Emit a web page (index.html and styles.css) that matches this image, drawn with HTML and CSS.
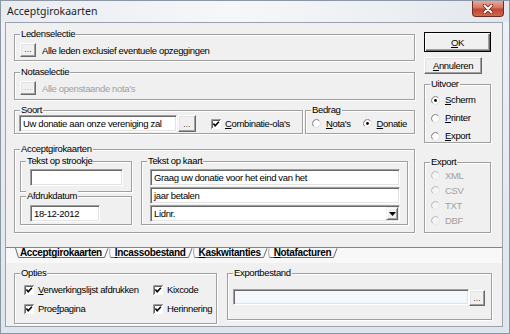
FILE: index.html
```html
<!DOCTYPE html>
<html lang="nl">
<head>
<meta charset="utf-8">
<title>Acceptgirokaarten</title>
<link rel="stylesheet" href="styles.css">
</head>
<body>
<div class="window">
  <div class="titlebar">
    <span class="title">Acceptgirokaarten</span>
    <div class="close">
      <svg width="14" height="10" viewBox="0 0 14 10"><path d="M3.5 1.5 L10.5 8.5 M10.5 1.5 L3.5 8.5" stroke="#6a2418" stroke-width="3.4" stroke-linecap="round"/><path d="M3.5 1.5 L10.5 8.5 M10.5 1.5 L3.5 8.5" stroke="#fff" stroke-width="1.9" stroke-linecap="round"/></svg>
    </div>
  </div>
  <div class="client">
    <div class="upper">
      <div class="leftcol">
        <div class="grp g-leden">
          <div class="legend">Ledenselectie</div>
          <div class="selrow">
            <div class="btn dots">...</div>
            <span class="seltext">Alle leden exclusief eventuele opzeggingen</span>
          </div>
        </div>
        <div class="grp g-nota">
          <div class="legend">Notaselectie</div>
          <div class="selrow">
            <div class="btn dots off">...</div>
            <span class="seltext off">Alle openstaande nota's</span>
          </div>
        </div>
        <div class="soortrow">
          <div class="grp g-soort">
            <div class="legend">Soort</div>
            <div class="ctlrow">
              <div class="edit e-soort">Uw donatie aan onze vereniging zal</div>
              <div class="btn dots d-soort">...</div>
              <div class="opt o-comb">
                <svg class="cb" viewBox="0 0 10 10"><rect width="10" height="10" fill="#fff"/><path d="M0.5 10V0.5H10" fill="none" stroke="#9a9a9a"/><path d="M1.5 9V1.5H9" fill="none" stroke="#606060"/><path d="M2.4 4.6 4.2 6.7 7.9 2.8" fill="none" stroke="#000" stroke-width="1.6"/></svg>
                <span><u>C</u>ombinatie-ola's</span>
              </div>
            </div>
          </div>
          <div class="grp g-bedrag">
            <div class="legend">Bedrag</div>
            <div class="ctlrow r-bedrag">
              <div class="opt">
                <svg class="rd" viewBox="0 0 9 9"><circle cx="4.5" cy="4.5" r="4" fill="#fff"/><path d="M1.67 7.33A4 4 0 0 1 7.33 1.67" fill="none" stroke="#7a7a7a"/><path d="M7.33 1.67A4 4 0 0 1 1.67 7.33" fill="none" stroke="#dedede"/></svg>
                <span><u>N</u>ota's</span>
              </div>
              <div class="opt o-don">
                <svg class="rd" viewBox="0 0 9 9"><circle cx="4.5" cy="4.5" r="4" fill="#fff"/><path d="M1.67 7.33A4 4 0 0 1 7.33 1.67" fill="none" stroke="#7a7a7a"/><path d="M7.33 1.67A4 4 0 0 1 1.67 7.33" fill="none" stroke="#dedede"/><circle cx="4.5" cy="4.5" r="1.4" fill="#000"/></svg>
                <span><u>D</u>onatie</span>
              </div>
            </div>
          </div>
        </div>
        <div class="grp g-accept">
          <div class="legend">Acceptgirokaarten</div>
          <div class="acc-body">
            <div class="acc-left">
              <div class="grp g-strook">
                <div class="legend">Tekst op strookje</div>
                <div class="edit e-strook"></div>
              </div>
              <div class="grp g-datum">
                <div class="legend">Afdrukdatum</div>
                <div class="edit e-datum">18-12-2012</div>
              </div>
            </div>
            <div class="grp g-kaart">
              <div class="legend">Tekst op kaart</div>
              <div class="kaart-fields">
                <div class="edit e-kaart">Graag uw donatie voor het eind van het</div>
                <div class="edit e-kaart">jaar betalen</div>
                <div class="edit e-kaart combo">
                  <span>Lidnr.</span>
                  <div class="ddbtn"><svg width="7" height="4" viewBox="0 0 7 4"><path d="M0 0H7L3.5 4Z" fill="#000"/></svg></div>
                </div>
              </div>
            </div>
          </div>
        </div>
      </div>
      <div class="rightcol">
        <div class="btn b-ok"><span><u>O</u>K</span></div>
        <div class="btn b-cancel"><span><u>A</u>nnuleren</span></div>
        <div class="grp g-uitvoer">
          <div class="legend">Uitvoer</div>
          <div class="radlist r-uit">
            <div class="opt">
              <svg class="rd" viewBox="0 0 9 9"><circle cx="4.5" cy="4.5" r="4" fill="#fff"/><path d="M1.67 7.33A4 4 0 0 1 7.33 1.67" fill="none" stroke="#7a7a7a"/><path d="M7.33 1.67A4 4 0 0 1 1.67 7.33" fill="none" stroke="#dedede"/><circle cx="4.5" cy="4.5" r="1.4" fill="#000"/></svg>
              <span><u>S</u>cherm</span>
            </div>
            <div class="opt">
              <svg class="rd" viewBox="0 0 9 9"><circle cx="4.5" cy="4.5" r="4" fill="#fff"/><path d="M1.67 7.33A4 4 0 0 1 7.33 1.67" fill="none" stroke="#7a7a7a"/><path d="M7.33 1.67A4 4 0 0 1 1.67 7.33" fill="none" stroke="#dedede"/></svg>
              <span><u>P</u>rinter</span>
            </div>
            <div class="opt">
              <svg class="rd" viewBox="0 0 9 9"><circle cx="4.5" cy="4.5" r="4" fill="#fff"/><path d="M1.67 7.33A4 4 0 0 1 7.33 1.67" fill="none" stroke="#7a7a7a"/><path d="M7.33 1.67A4 4 0 0 1 1.67 7.33" fill="none" stroke="#dedede"/></svg>
              <span><u>E</u>xport</span>
            </div>
          </div>
        </div>
        <div class="grp g-export">
          <div class="legend">Export</div>
          <div class="radlist r-exp">
            <div class="opt off">
              <svg class="rd" viewBox="0 0 9 9"><circle cx="4.5" cy="4.5" r="4" fill="#f4f4f4"/><path d="M1.67 7.33A4 4 0 0 1 7.33 1.67" fill="none" stroke="#b4b4b4"/><path d="M7.33 1.67A4 4 0 0 1 1.67 7.33" fill="none" stroke="#e6e6e6"/></svg>
              <span>XML</span>
            </div>
            <div class="opt off">
              <svg class="rd" viewBox="0 0 9 9"><circle cx="4.5" cy="4.5" r="4" fill="#f4f4f4"/><path d="M1.67 7.33A4 4 0 0 1 7.33 1.67" fill="none" stroke="#b4b4b4"/><path d="M7.33 1.67A4 4 0 0 1 1.67 7.33" fill="none" stroke="#e6e6e6"/></svg>
              <span>CSV</span>
            </div>
            <div class="opt off">
              <svg class="rd" viewBox="0 0 9 9"><circle cx="4.5" cy="4.5" r="4" fill="#f4f4f4"/><path d="M1.67 7.33A4 4 0 0 1 7.33 1.67" fill="none" stroke="#b4b4b4"/><path d="M7.33 1.67A4 4 0 0 1 1.67 7.33" fill="none" stroke="#e6e6e6"/></svg>
              <span>TXT</span>
            </div>
            <div class="opt off">
              <svg class="rd" viewBox="0 0 9 9"><circle cx="4.5" cy="4.5" r="4" fill="#f4f4f4"/><path d="M1.67 7.33A4 4 0 0 1 7.33 1.67" fill="none" stroke="#b4b4b4"/><path d="M7.33 1.67A4 4 0 0 1 1.67 7.33" fill="none" stroke="#e6e6e6"/></svg>
              <span>DBF</span>
            </div>
          </div>
        </div>
      </div>
    </div>
    <div class="tabbar">
      <svg class="tedge" width="5" height="10" viewBox="0 0 5 10"><path d="M0.5 0 L3.5 9.5 H5" fill="none" stroke="#6b6b6b"/></svg>
      <span class="tab">Acceptgirokaarten</span>
      <svg class="tsep" width="13" height="10" viewBox="0 0 13 10"><path d="M8 0.5 Q6.8 5 8.6 9.5" fill="none" stroke="#a8a8a8"/><path d="M0 9.5 H2.5 L6 0.3" fill="none" stroke="#6b6b6b"/><path d="M8.6 9.5 H13" fill="none" stroke="#6b6b6b"/></svg>
      <span class="tab"><u>I</u>ncassobestand</span>
      <svg class="tsep" width="13" height="10" viewBox="0 0 13 10"><path d="M8 0.5 Q6.8 5 8.6 9.5" fill="none" stroke="#a8a8a8"/><path d="M0 9.5 H2.5 L6 0.3" fill="none" stroke="#6b6b6b"/><path d="M8.6 9.5 H13" fill="none" stroke="#6b6b6b"/></svg>
      <span class="tab"><u>K</u>askwitanties</span>
      <svg class="tsep" width="13" height="10" viewBox="0 0 13 10"><path d="M8 0.5 Q6.8 5 8.6 9.5" fill="none" stroke="#a8a8a8"/><path d="M0 9.5 H2.5 L6 0.3" fill="none" stroke="#6b6b6b"/><path d="M8.6 9.5 H13" fill="none" stroke="#6b6b6b"/></svg>
      <span class="tab"><u>N</u>otafacturen</span>
      <svg class="tedge" width="7" height="10" viewBox="0 0 7 10"><path d="M0 9.5 H2.5 L6 0.3" fill="none" stroke="#6b6b6b"/></svg>
    </div>
    <div class="lower">
      <div class="grp g-opties">
        <div class="legend">Opties</div>
        <div class="optgrid">
          <div class="opt">
            <svg class="cb" viewBox="0 0 10 10"><rect width="10" height="10" fill="#fff"/><path d="M0.5 10V0.5H10" fill="none" stroke="#9a9a9a"/><path d="M1.5 9V1.5H9" fill="none" stroke="#606060"/><path d="M2.4 4.6 4.2 6.7 7.9 2.8" fill="none" stroke="#000" stroke-width="1.6"/></svg>
            <span><u>V</u>erwerkingslijst afdrukken</span>
          </div>
          <div class="opt">
            <svg class="cb" viewBox="0 0 10 10"><rect width="10" height="10" fill="#fff"/><path d="M0.5 10V0.5H10" fill="none" stroke="#9a9a9a"/><path d="M1.5 9V1.5H9" fill="none" stroke="#606060"/><path d="M2.4 4.6 4.2 6.7 7.9 2.8" fill="none" stroke="#000" stroke-width="1.6"/></svg>
            <span>Kixcode</span>
          </div>
          <div class="opt">
            <svg class="cb" viewBox="0 0 10 10"><rect width="10" height="10" fill="#fff"/><path d="M0.5 10V0.5H10" fill="none" stroke="#9a9a9a"/><path d="M1.5 9V1.5H9" fill="none" stroke="#606060"/><path d="M2.4 4.6 4.2 6.7 7.9 2.8" fill="none" stroke="#000" stroke-width="1.6"/></svg>
            <span>Proe<u>f</u>pagina</span>
          </div>
          <div class="opt">
            <svg class="cb" viewBox="0 0 10 10"><rect width="10" height="10" fill="#fff"/><path d="M0.5 10V0.5H10" fill="none" stroke="#9a9a9a"/><path d="M1.5 9V1.5H9" fill="none" stroke="#606060"/><path d="M2.4 4.6 4.2 6.7 7.9 2.8" fill="none" stroke="#000" stroke-width="1.6"/></svg>
            <span>Herinnering</span>
          </div>
        </div>
      </div>
      <div class="grp g-bestand">
        <div class="legend">Exportbestand</div>
        <div class="fileline">
          <div class="edit e-file"></div>
          <div class="btn dots d-file">...</div>
        </div>
      </div>
    </div>
  </div>
</div>
</body>
</html>
```

FILE: styles.css
```css
* { box-sizing: border-box; }
html, body { margin: 0; padding: 0; }
body {
  width: 510px;
  height: 334px;
  overflow: hidden;
  background: #e3e8ee;
  font-family: "Liberation Sans", Arial, sans-serif;
  font-size: 9.5px;
  letter-spacing: -0.35px;
  color: #000;
}
u { text-decoration: underline; text-underline-offset: 1px; }

.window {
  width: 510px;
  height: 334px;
  border: 1px solid #8c97a3;
  background: linear-gradient(to bottom, #eef1f5, #dfe5ec);
  display: flex;
  flex-direction: column;
}

.titlebar {
  height: 21px;
  display: flex;
  align-items: flex-start;
  background: linear-gradient(to right, #e8ecf1 0%, #f6f7f9 45%, #eef1f4 70%, #e2e7ed 100%);
}
.title {
  font-family: "Noto Sans", "Open Sans", sans-serif;
  font-size: 10.5px;
  letter-spacing: 0;
  line-height: 21px;
  padding-left: 6px;
  color: #1e1e1e;
}
.close {
  margin-left: auto;
  margin-right: 5px;
  width: 32px;
  height: 16px;
  border: 1px solid #6d2b22;
  border-top: none;
  border-radius: 0 0 4px 4px;
  background: linear-gradient(to bottom, #e9a99b 0%, #d47663 45%, #c24530 55%, #cf6a4f 100%);
  display: flex;
  align-items: center;
  justify-content: center;
}

.client {
  margin: 0 6px 0 4px;
  height: 305px;
  border: 1px solid #9aa3ad;
  background: #f0f0f0;
  display: flex;
  flex-direction: column;
}

.upper {
  height: 225px;
  border-bottom: 1px solid #858585;
  padding: 9px 0 0 8px;
  display: flex;
  align-items: flex-start;
}
.leftcol { width: 401px; padding-top: 2px; display: flex; flex-direction: column; }
.rightcol { width: 67px; margin-left: 9px; display: flex; flex-direction: column; }

/* group boxes */
.grp {
  border: 1px solid #a0a0a0;
  box-shadow: inset 1px 1px 0 #fff, 1px 1px 0 #fff;
}
.legend {
  display: block;
  width: max-content;
  height: 12px;
  line-height: 12px;
  margin: -7px 0 0 5px;
  padding: 0 1px;
  background: #f0f0f0;
  white-space: nowrap;
}

/* sunken edit */
.edit {
  background: #fff;
  border: 1px solid;
  border-color: #a0a0a0 #fff #fff #a0a0a0;
  box-shadow: inset 1px 1px 0 #696969, inset -1px -1px 0 #e3e3e3;
  height: 17px;
  line-height: 15px;
  padding-left: 3px;
  white-space: nowrap;
  overflow: hidden;
}

/* raised button */
.btn {
  background: #f0f0f0;
  border: 1px solid;
  border-color: #fff #696969 #696969 #fff;
  box-shadow: inset -1px -1px 0 #a0a0a0, inset 1px 1px 0 #e3e3e3;
  display: flex;
  align-items: center;
  justify-content: center;
}
.dots {
  width: 16px;
  height: 14px;
  font-size: 8px;
  line-height: 8px;
  letter-spacing: 0.3px;
  align-items: flex-end;
  padding-bottom: 2px;
}
.off { color: #a0a0a0; }

.b-ok {
  height: 20px;
  width: 67px;
  border: 1px solid #000;
  box-shadow: inset 1px 1px 0 #fff, inset -1px -1px 0 #696969, inset -2px -2px 0 #a0a0a0;
}
.b-cancel { height: 17px; width: 58px; margin-top: 5px; }

/* selection rows */
.g-leden { height: 27px; }
.g-nota { height: 28px; margin-top: 11px; }
.selrow { display: flex; align-items: center; margin: 3px 0 0 5px; height: 14px; }
.seltext { margin-left: 6px; line-height: 14px; padding-top: 1px; }

/* soort / bedrag */
.soortrow { display: flex; margin-top: 10px; gap: 2px; }
.g-soort { width: 289px; height: 24px; }
.g-bedrag { width: 110px; height: 24px; }
.ctlrow { display: flex; align-items: center; height: 17px; margin: -1px 0 0 4px; }
.e-soort { width: 158px; }
.d-soort { width: 18px; height: 17px; margin-left: 1px; }
.o-comb { margin-left: 15px; }
.r-bedrag { margin-left: 6px; }
.o-don { margin-left: 12px; }

.opt { display: flex; align-items: center; white-space: nowrap; }
.opt span { margin-left: 5px; line-height: 12px; }
.cb { width: 10px; height: 10px; flex: none; }
.o-comb .cb + span, .optgrid .cb + span { margin-left: 4px; }
.rd { width: 9px; height: 9px; flex: none; }

/* acceptgirokaarten */
.g-accept { height: 84px; margin-top: 15px; }
.acc-body { display: flex; margin: 6px 0 0 5px; }
.acc-left { width: 112px; display: flex; flex-direction: column; }
.g-strook { height: 31px; }
.g-datum { height: 29px; margin-top: 4px; }
.e-strook { width: 93px; margin: 2px 0 0 9px; }
.e-datum { width: 70px; margin: 3px 0 0 9px; }
.g-kaart { width: 267px; height: 64px; margin-left: 9px; }
.kaart-fields { display: flex; flex-direction: column; gap: 1px; margin: 2px 0 0 8px; }
.e-kaart { width: 250px; }
.combo { display: flex; align-items: flex-start; padding-right: 1px; }
.combo span { flex: 1; }
.ddbtn {
  width: 12px;
  height: 13px;
  margin-top: 1px;
  background: #f0f0f0;
  border: 1px solid;
  border-color: #f0f0f0 #696969 #696969 #f0f0f0;
  box-shadow: inset 1px 1px 0 #fff, inset -1px -1px 0 #a0a0a0;
  display: flex;
  align-items: center;
  justify-content: center;
}

/* right column groups */
.g-uitvoer { height: 59px; margin-top: 10px; }
.g-export { height: 71px; margin-top: 19px; }
.radlist { display: flex; flex-direction: column; margin-left: 6px; }
.r-uit { margin-top: 1px; }
.r-uit .opt { height: 18px; }
.r-exp .opt { height: 15px; }

/* tabs */
.tabbar {
  height: 15px;
  background: #f8f8f8;
  display: flex;
  align-items: flex-start;
  padding-left: 9px;
}
.tedge, .tsep { flex: none; display: block; }
.tab {
  height: 10px;
  border-bottom: 1px solid #6b6b6b;
  font-weight: bold;
  font-size: 10px;
  letter-spacing: -0.35px;
  line-height: 9px;
  white-space: nowrap;
}

/* lower */
.lower {
  flex: 1;
  display: flex;
  align-items: flex-start;
  padding: 10px 0 0 8px;
  gap: 10px;
}
.g-opties { width: 203px; height: 51px; }
.optgrid {
  display: grid;
  grid-template-columns: 129px auto;
  grid-auto-rows: 19px;
  margin: 1px 0 0 9px;
}
.g-bestand { width: 265px; height: 47px; }
.fileline { display: flex; margin: 10px 0 0 5px; }
.e-file { width: 236px; height: 16px; background: #f4f7fb; }
.d-file { width: 16px; height: 16px; margin-top: 1px; }
```
